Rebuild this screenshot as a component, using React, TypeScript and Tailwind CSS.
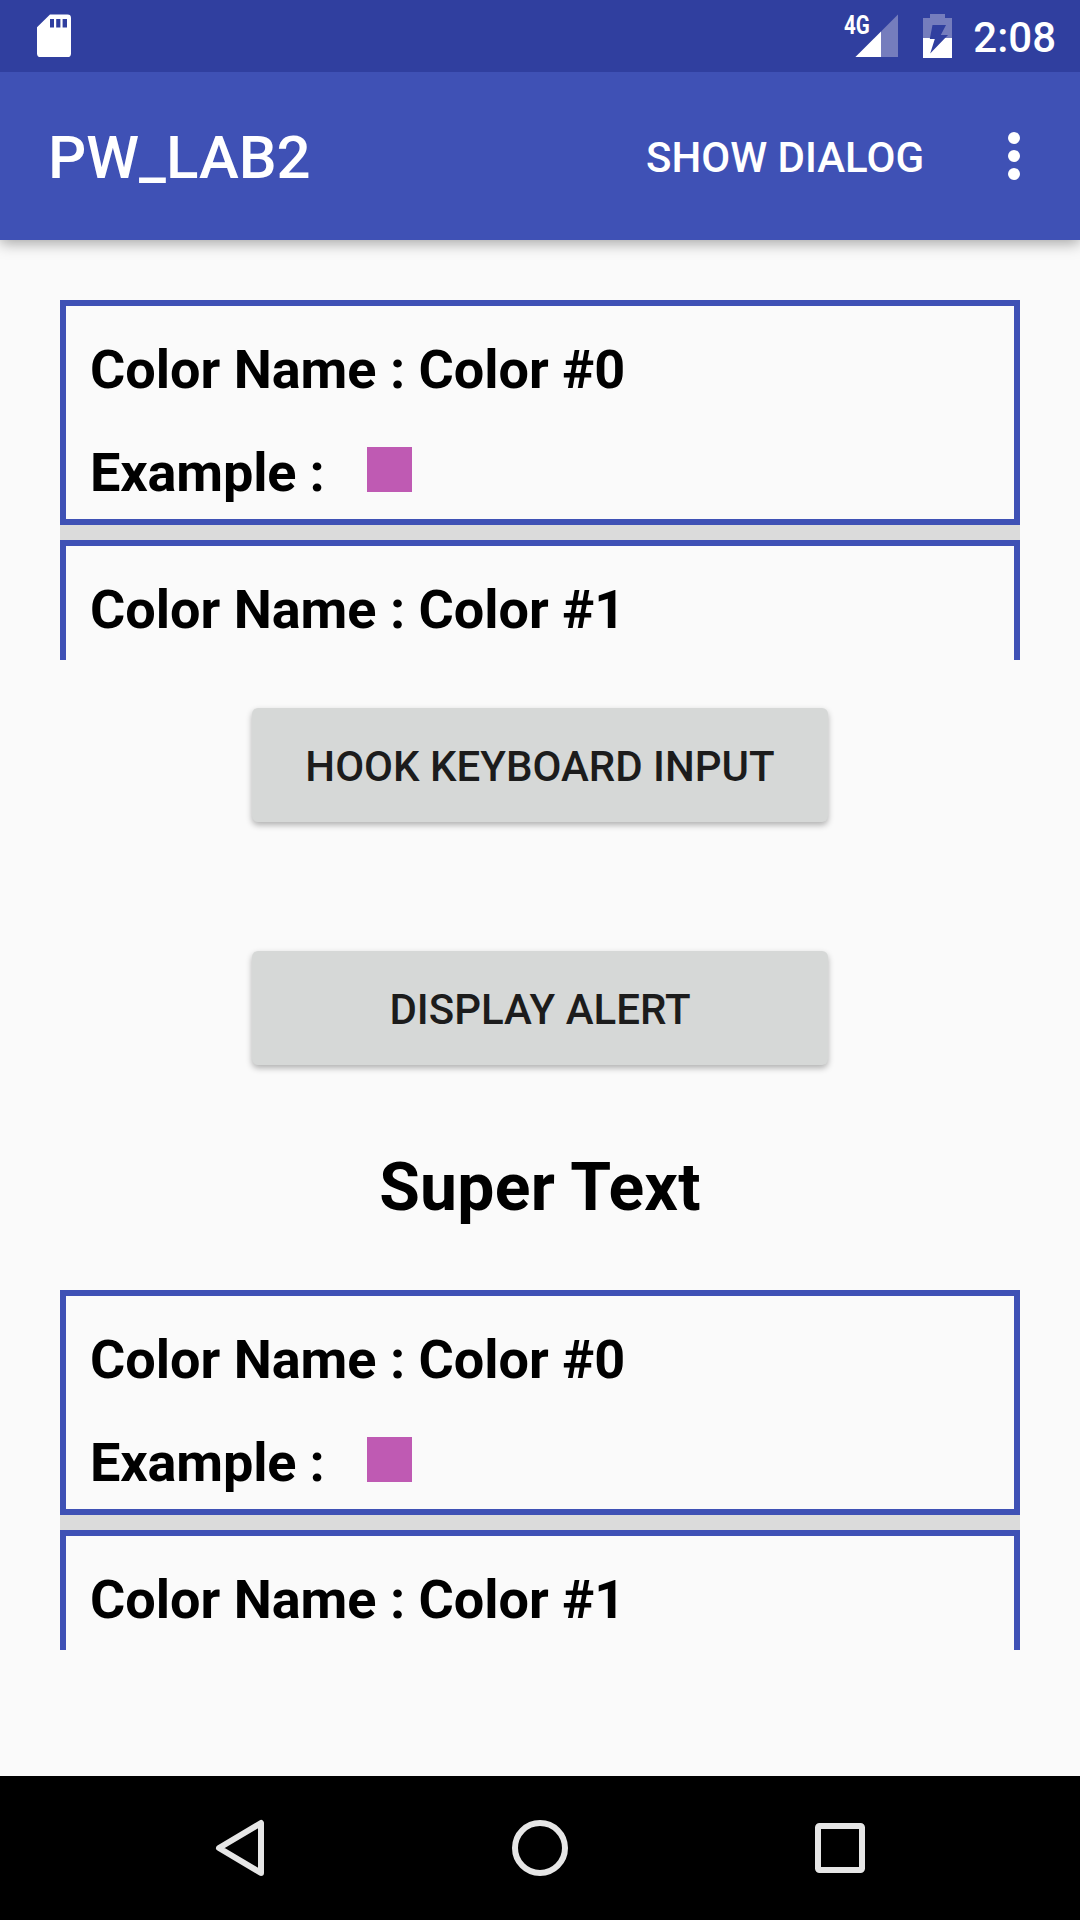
import React from "react";

function StatusBar() {
  return (
    <div className="relative z-10 flex h-[72px] items-center bg-[#303f9f] text-white">
      <svg className="ml-9 h-[72px] w-9" viewBox="36 0 36 72" fill="none">
        <path
          fill="#fff"
          fillRule="evenodd"
          d="M50 14.6H67.5Q71 14.6 71 18V53.4Q71 57 67.5 57H40.5Q37 57 37 53.4V27.3ZM50 19V27.4H54V19ZM56.2 19V27.4H60.4V19ZM62.6 19V27.4H67V19Z"
        />
      </svg>
      <div className="relative ml-auto mr-6 h-[72px] w-[60px]">
        <span className="absolute left-[6px] top-[11px] origin-left scale-x-[0.82] text-[25px] font-bold leading-[29px]">
          4G
        </span>
        <svg className="h-[72px] w-[60px]" viewBox="838 0 60 72">
          <path fill="#757dbd" d="M881 31.6L898 14.6V57H881Z" />
          <path fill="#fff" d="M855.4 57L881 31.6V57Z" />
        </svg>
      </div>
      <svg className="mr-5 h-[72px] w-[31px]" viewBox="922 0 31 72">
        <path fill="#757dbd" d="M923 18H930V14H945V18H952V38H923Z" />
        <path fill="#fff" d="M923 38H952V58H923Z" />
        <path fill="#303f9f" d="M932.5 25H946L940.8 35H948L930.2 53.6L934.8 39H929.8Z" />
      </svg>
      <span className="mr-6 pt-[3px] text-[42px] font-medium leading-[50px]">2:08</span>
    </div>
  );
}

function Toolbar() {
  return (
    <header className="relative flex h-[168px] items-center bg-[#3f51b5] pl-12 text-white shadow-[0_3px_14px_rgba(0,0,0,0.36)]">
      <h1 className="pt-[3px] text-[60px] font-medium leading-[70px]">PW_LAB2</h1>
      <button className="ml-auto pt-[3px] text-[42px] font-medium leading-[50px]">SHOW DIALOG</button>
      <svg className="ml-[72px] mr-12 h-12 w-[36px]" viewBox="0 0 36 48" fill="#fff">
        <circle cx="18" cy="6" r="6" />
        <circle cx="18" cy="24" r="6" />
        <circle cx="18" cy="42" r="6" />
      </svg>
    </header>
  );
}

function ColorList() {
  return (
    <section className="mx-[60px] flex h-[360px] flex-col text-[54px] font-bold leading-[64px] tracking-[-0.02px] text-black">
      <div className="h-[225px] border-[6px] border-[#3f51b5] pl-6 pt-8">
        <p>Color Name : Color #0</p>
        <div className="mt-[39px] flex">
          <span className="w-[277px] tracking-[-0.15px]">Example :</span>
          <div className="mt-[6px] h-[45px] w-[45px] bg-[#bf5ab3]" />
        </div>
      </div>
      <div className="h-[15px] bg-[#dbdbdb]" />
      <div className="h-[120px] border-x-[6px] border-t-[6px] border-[#3f51b5] pl-6 pt-8">
        <p>Color Name : Color #1</p>
      </div>
    </section>
  );
}

function RaisedButton({ label }: { label: string }) {
  return (
    <button className="mx-auto block h-[114px] w-[576px] rounded-[6px] bg-[#d6d8d7] pt-[3px] text-[42px] font-medium leading-[50px] text-[#1c1c1c] shadow-[0_3px_6px_rgba(0,0,0,0.3)]">
      {label}
    </button>
  );
}

function NavigationBar() {
  return (
    <nav className="flex h-36 items-center justify-between bg-black px-[210px]">
      <svg className="h-[60px] w-[60px]" viewBox="210 1818 60 60" fill="none" stroke="#e6e6e6" strokeWidth="6" strokeLinejoin="round">
        <path d="M261 1823V1873L219 1848Z" />
      </svg>
      <svg className="h-[60px] w-[60px]" viewBox="0 0 60 60" fill="none" stroke="#e6e6e6" strokeWidth="6">
        <circle cx="30" cy="30" r="25" />
      </svg>
      <svg className="h-[60px] w-[60px]" viewBox="0 0 60 60" fill="none" stroke="#e6e6e6" strokeWidth="6">
        <rect x="8" y="8" width="44" height="44" rx="1.5" />
      </svg>
    </nav>
  );
}

export default function App() {
  return (
    <div className="flex h-[1920px] w-[1080px] flex-col overflow-hidden bg-[#fafafa] font-[Roboto,sans-serif]">
      <StatusBar />
      <Toolbar />
      <main className="flex-1 pt-[60px]">
        <ColorList />
        <div className="mt-12 flex flex-col gap-[129px]">
          <RaisedButton label="HOOK KEYBOARD INPUT" />
          <RaisedButton label="DISPLAY ALERT" />
        </div>
        <h2 className="mt-[84px] text-center text-[66px] font-bold leading-[78px] tracking-[0.3px] text-black">Super Text</h2>
        <div className="mt-[63px]">
          <ColorList />
        </div>
      </main>
      <NavigationBar />
    </div>
  );
}
